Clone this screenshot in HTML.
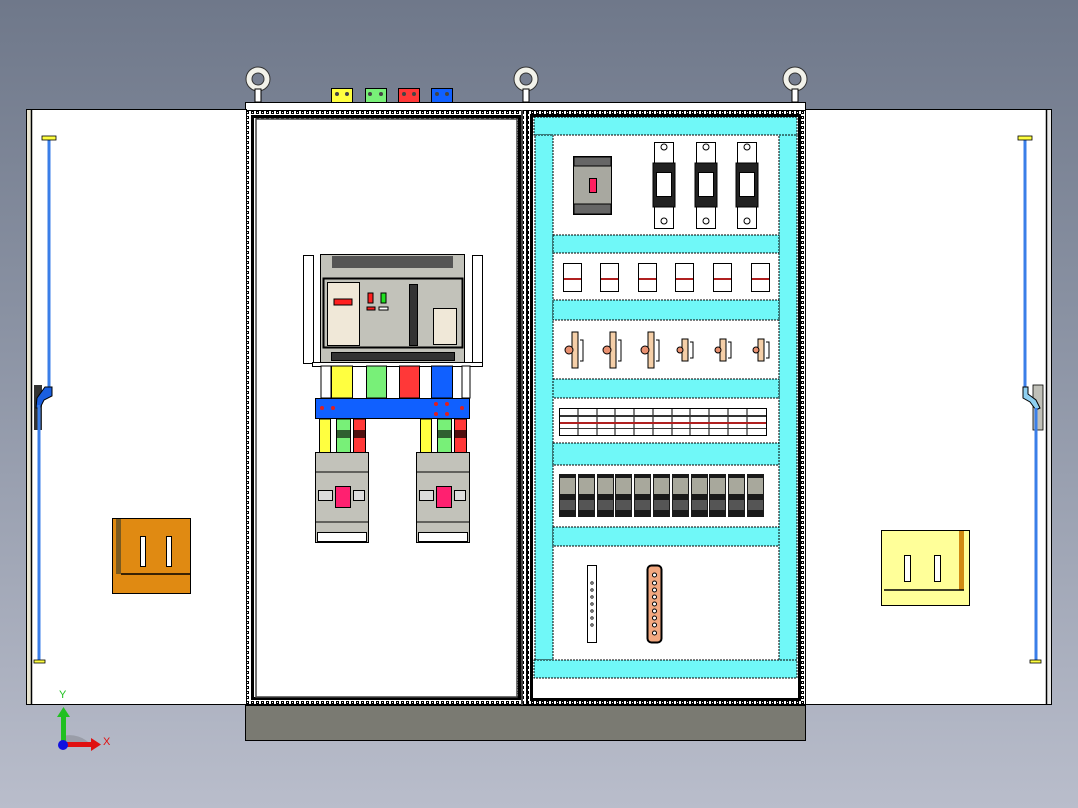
<!DOCTYPE html>
<html><head><meta charset="utf-8"><style>
html,body{margin:0;padding:0;width:1078px;height:808px;overflow:hidden;font-family:"Liberation Sans",sans-serif}
body{background:linear-gradient(180deg,#6f788a 0%,#8a92a3 40%,#b9bdcb 100%)}
</style></head><body>
<svg width="1078" height="808" viewBox="0 0 1078 808" xmlns="http://www.w3.org/2000/svg" style="position:absolute;left:0;top:0">
<defs>
<pattern id="dots" width="5" height="5" patternUnits="userSpaceOnUse"><rect width="5" height="5" fill="#fff"/><rect x="1" y="1" width="3" height="3" fill="#000"/><rect x="2" y="2" width="1" height="1" fill="#fff"/></pattern>
</defs>
<!-- eye bolts -->
<g fill="none" stroke="#333" stroke-width="7">
<circle cx="258" cy="79" r="9"/><circle cx="526" cy="79" r="9"/><circle cx="795" cy="79" r="9"/></g>
<g fill="none" stroke="#f2f2ea" stroke-width="5">
<circle cx="258" cy="79" r="9"/><circle cx="526" cy="79" r="9"/><circle cx="795" cy="79" r="9"/></g>
<g fill="#fff" stroke="#000" stroke-width="1"><rect x="255" y="89" width="6" height="13"/><rect x="523" y="89" width="6" height="13"/><rect x="792" y="89" width="6" height="13"/></g>
<!-- colored terminals -->
<g stroke="#000" stroke-width="1"><rect x="331.5" y="88.5" width="21" height="14" fill="#ffff40"/><rect x="365.5" y="88.5" width="21" height="14" fill="#78f078"/><rect x="398.5" y="88.5" width="21" height="14" fill="#ff3838"/><rect x="431.5" y="88.5" width="21" height="14" fill="#1060ff"/></g>
<g fill="#444"><circle cx="337" cy="94" r="2"/><circle cx="347" cy="94" r="2"/><circle cx="370" cy="94" r="2"/><circle cx="381" cy="94" r="2"/><circle cx="404" cy="94" r="2"/><circle cx="414" cy="94" r="2"/><circle cx="437" cy="94" r="2"/><circle cx="447" cy="94" r="2"/></g>
<!-- top band -->
<rect x="245.5" y="102.5" width="560" height="8" fill="#fff" stroke="#000"/>
<!-- plinth -->
<rect x="245.5" y="705.5" width="560" height="35" fill="#7a7a72" stroke="#000"/>
<!-- left door -->
<rect x="26.5" y="109.5" width="220" height="595" fill="#fff" stroke="#000"/>
<rect x="27" y="110" width="4" height="594" fill="#e8e4d0"/><line x1="31.5" y1="110" x2="31.5" y2="704" stroke="#000" stroke-width="1.5"/>
<line x1="49" y1="140" x2="49" y2="388" stroke="#3a7ee8" stroke-width="3"/>
<rect x="42" y="136" width="14" height="4" fill="#ffff40" stroke="#000" stroke-width=".8"/>
<rect x="34" y="385" width="8" height="45" fill="#333"/>
<path d="M45 387 L52 387 L52 396 L44 400 L40 408 L36 408 L37 398 Z" fill="#1a5fe0" stroke="#000" stroke-width="1"/>
<line x1="39" y1="405" x2="39" y2="662" stroke="#3a7ee8" stroke-width="3"/>
<rect x="34" y="660" width="11" height="3" fill="#ffff40" stroke="#000" stroke-width=".8"/>
<rect x="112.5" y="518.5" width="78" height="75" fill="#e08a12" stroke="#000"/>
<rect x="116" y="519" width="5" height="55" fill="#7a5a20"/><line x1="121" y1="574" x2="190" y2="574" stroke="#000" stroke-width="1.5"/>
<rect x="140.5" y="536.5" width="5" height="30" fill="#fff" stroke="#000"/><rect x="166.5" y="536.5" width="5" height="30" fill="#fff" stroke="#000"/>
<!-- right door -->
<rect x="805.5" y="109.5" width="246" height="595" fill="#fff" stroke="#000"/>
<rect x="1046" y="110" width="5" height="594" fill="#e8e8e8"/><line x1="1046.5" y1="110" x2="1046.5" y2="704" stroke="#000" stroke-width="1.5"/>
<line x1="1025" y1="140" x2="1025" y2="388" stroke="#3a7ee8" stroke-width="3"/>
<rect x="1018" y="136" width="14" height="4" fill="#ffff40" stroke="#000" stroke-width=".8"/>
<rect x="1033" y="385" width="10" height="45" fill="#c0c0b8" stroke="#000" stroke-width=".8"/>
<path d="M1023 387 L1028 387 L1028 394 L1036 400 L1040 408 L1036 410 L1030 402 L1023 398 Z" fill="#8fd0f0" stroke="#000" stroke-width="1"/>
<line x1="1036" y1="408" x2="1036" y2="662" stroke="#3a7ee8" stroke-width="3"/>
<rect x="1030" y="660" width="11" height="3" fill="#ffff40" stroke="#000" stroke-width=".8"/>
<rect x="881.5" y="530.5" width="88" height="75" fill="#ffff99" stroke="#000"/>
<rect x="959" y="531" width="5" height="59" fill="#d08a12"/><line x1="884" y1="590" x2="964" y2="590" stroke="#000" stroke-width="1.5"/>
<rect x="904.5" y="555.5" width="6" height="26" fill="#fff" stroke="#000"/><rect x="934.5" y="555.5" width="6" height="26" fill="#fff" stroke="#000"/>
<!-- left compartment frame -->
<rect x="246" y="110" width="281" height="595" fill="url(#dots)"/>
<rect x="246.5" y="110.5" width="280" height="594" fill="none" stroke="#000"/>
<rect x="252.5" y="116.5" width="267" height="582" fill="none" stroke="#000" stroke-width="3"/>
<rect x="256" y="119" width="261" height="578" fill="#fff" stroke="#444" stroke-width="1.5"/>
<line x1="522" y1="110" x2="522" y2="705" stroke="#444" stroke-width="2"/>
<!-- right compartment frame -->
<rect x="527" y="110" width="279" height="595" fill="url(#dots)"/>
<rect x="527.5" y="110.5" width="278" height="594" fill="none" stroke="#000"/>
<rect x="531.5" y="115.5" width="268" height="584" fill="#fff" stroke="#000" stroke-width="3"/>
<g fill="#70f8f8" stroke="#000" stroke-width="1" stroke-dasharray="2 1">
<rect x="534" y="117" width="263" height="18"/>
<rect x="535" y="135" width="18" height="525"/>
<rect x="779" y="135" width="18" height="525"/>
<rect x="534" y="660" width="263" height="18"/>
<rect x="553" y="235" width="226" height="18"/><rect x="553" y="300" width="226" height="20"/><rect x="553" y="379" width="226" height="19"/><rect x="553" y="443" width="226" height="22"/><rect x="553" y="527" width="226" height="19"/>
</g>
<!-- ACB -->
<g stroke="#000" stroke-width="1">
<rect x="303.5" y="255.5" width="10" height="108" fill="#fff"/><rect x="472.5" y="255.5" width="10" height="108" fill="#fff"/>
<rect x="312.5" y="362.5" width="170" height="4" fill="#fff"/>
<rect x="320.5" y="254.5" width="144" height="108" fill="#c2c2ba"/>
<rect x="332" y="256" width="121" height="12" fill="#555" stroke="none"/>
<rect x="323.5" y="278.5" width="139" height="69" fill="#c2c2ba" stroke-width="2"/>
<rect x="327.5" y="282.5" width="32" height="63" fill="#f0e8d8"/>
<rect x="334" y="299" width="18" height="6" fill="#ff2020"/>
<rect x="368" y="293" width="5" height="10" fill="#ff2020"/><rect x="381" y="293" width="5" height="10" fill="#20e020"/>
<rect x="367" y="307" width="8" height="3" fill="#ff2020"/><rect x="379" y="307" width="9" height="3" fill="#fff"/>
<rect x="409.5" y="284.5" width="8" height="61" fill="#333"/>
<rect x="433.5" y="308.5" width="23" height="36" fill="#f0e8d8"/>
<rect x="331.5" y="352.5" width="123" height="8" fill="#333"/>
</g>
<!-- busbars -->
<g stroke="#000" stroke-width="1">
<rect x="321" y="366" width="10" height="32" fill="#fff"/><rect x="462" y="366" width="8" height="32" fill="#fff"/>
<rect x="331.5" y="366" width="21" height="32" fill="#ffff40"/><rect x="366.5" y="366" width="20" height="32" fill="#78f078"/><rect x="399.5" y="366" width="20" height="32" fill="#ff3838"/><rect x="431.5" y="366" width="21" height="32" fill="#1060ff"/>
<rect x="315.5" y="398.5" width="154" height="20" fill="#1060ff"/>
<rect x="319.5" y="419" width="11" height="41" fill="#ffff40"/><rect x="336.5" y="419" width="14" height="41" fill="#78f078"/><rect x="353.5" y="419" width="12" height="41" fill="#ff3838"/>
<rect x="420.5" y="419" width="11" height="41" fill="#ffff40"/><rect x="437.5" y="419" width="14" height="41" fill="#78f078"/><rect x="454.5" y="419" width="12" height="41" fill="#ff3838"/>
</g>
<rect x="337" y="430" width="13" height="8" fill="#2f6030"/><rect x="354" y="430" width="11" height="8" fill="#501010"/>
<rect x="438" y="430" width="13" height="8" fill="#2f6030"/><rect x="455" y="430" width="11" height="8" fill="#501010"/>
<g fill="#e02020"><circle cx="322" cy="408" r="2"/><circle cx="333" cy="408" r="2"/><circle cx="436" cy="404" r="2"/><circle cx="447" cy="404" r="2"/><circle cx="436" cy="414" r="2"/><circle cx="447" cy="414" r="2"/><circle cx="462" cy="408" r="2"/></g>
<!-- small breakers -->
<g stroke="#000" stroke-width="1">
<rect x="315.5" y="452.5" width="53" height="90" fill="#c2c2ba"/><rect x="416.5" y="452.5" width="53" height="90" fill="#c2c2ba"/>
<line x1="316" y1="472" x2="368" y2="472"/><line x1="316" y1="522" x2="368" y2="522"/>
<line x1="417" y1="472" x2="469" y2="472"/><line x1="417" y1="522" x2="469" y2="522"/>
<rect x="335.5" y="486.5" width="15" height="21" fill="#ff2070"/><rect x="436.5" y="486.5" width="15" height="21" fill="#ff2070"/>
<rect x="318.5" y="490.5" width="14" height="10" fill="#ddd"/><rect x="353.5" y="490.5" width="11" height="10" fill="#ddd"/>
<rect x="419.5" y="490.5" width="14" height="10" fill="#ddd"/><rect x="454.5" y="490.5" width="11" height="10" fill="#ddd"/>
<rect x="317.5" y="532.5" width="49" height="9" fill="#fff"/><rect x="418.5" y="532.5" width="49" height="9" fill="#fff"/>
</g>
<!-- row1: MCCB + fuses -->
<g stroke="#000" stroke-width="1">
<rect x="573.5" y="156.5" width="38" height="58" fill="#a8a8a0"/>
<rect x="574" y="157" width="37" height="9" fill="#666"/><rect x="574" y="204" width="37" height="10" fill="#666"/>
<rect x="589.5" y="178.5" width="7" height="14" fill="#ff2060"/>
<rect x="654.5" y="142.5" width="19" height="86" fill="#fff"/><rect x="696.5" y="142.5" width="19" height="86" fill="#fff"/><rect x="737.5" y="142.5" width="19" height="86" fill="#fff"/>
<rect x="653" y="163" width="22" height="44" fill="#222"/><rect x="695" y="163" width="22" height="44" fill="#222"/><rect x="736" y="163" width="22" height="44" fill="#222"/>
<rect x="656.5" y="172.5" width="15" height="24" fill="#fff"/><rect x="698.5" y="172.5" width="15" height="24" fill="#fff"/><rect x="739.5" y="172.5" width="15" height="24" fill="#fff"/>
<circle cx="664" cy="147" r="3" fill="#fff"/><circle cx="706" cy="147" r="3" fill="#fff"/><circle cx="747" cy="147" r="3" fill="#fff"/>
<circle cx="664" cy="221" r="3" fill="#fff"/><circle cx="706" cy="221" r="3" fill="#fff"/><circle cx="747" cy="221" r="3" fill="#fff"/>
</g>
<!-- row2: modules -->
<g stroke="#000" stroke-width="1" fill="#fff">
<rect x="563.5" y="263.5" width="18" height="28"/><rect x="600.5" y="263.5" width="18" height="28"/><rect x="638.5" y="263.5" width="18" height="28"/><rect x="675.5" y="263.5" width="18" height="28"/><rect x="713.5" y="263.5" width="18" height="28"/><rect x="751.5" y="263.5" width="18" height="28"/>
</g>
<g fill="#b02020"><rect x="564" y="278" width="17" height="2"/><rect x="601" y="278" width="17" height="2"/><rect x="639" y="278" width="17" height="2"/><rect x="676" y="278" width="17" height="2"/><rect x="714" y="278" width="17" height="2"/><rect x="752" y="278" width="17" height="2"/></g>
<!-- row3: pilot lights -->
<g stroke="#000" stroke-width="1">
<g fill="#f5cfa8"><rect x="572" y="332" width="6" height="36"/><rect x="610" y="332" width="6" height="36"/><rect x="648" y="332" width="6" height="36"/><rect x="682" y="339" width="6" height="22"/><rect x="720" y="339" width="6" height="22"/><rect x="758" y="339" width="6" height="22"/></g>
<g fill="#e89070"><circle cx="569" cy="350" r="4"/><circle cx="607" cy="350" r="4"/><circle cx="645" cy="350" r="4"/><circle cx="680" cy="350" r="3"/><circle cx="718" cy="350" r="3"/><circle cx="756" cy="350" r="3"/></g>
<g fill="none"><path d="M580 340 h3 v21 h-3"/><path d="M618 340 h3 v21 h-3"/><path d="M656 340 h3 v21 h-3"/><path d="M690 342 h3 v16 h-3"/><path d="M728 342 h3 v16 h-3"/><path d="M766 342 h3 v16 h-3"/></g>
</g>
<!-- row4: strip -->
<rect x="559.5" y="408.5" width="207" height="27" fill="#fff" stroke="#000"/>
<g stroke="#000"><line x1="578" y1="408" x2="578" y2="436"/><line x1="597" y1="408" x2="597" y2="436"/><line x1="615" y1="408" x2="615" y2="436"/><line x1="634" y1="408" x2="634" y2="436"/><line x1="653" y1="408" x2="653" y2="436"/><line x1="672" y1="408" x2="672" y2="436"/><line x1="690" y1="408" x2="690" y2="436"/><line x1="709" y1="408" x2="709" y2="436"/><line x1="728" y1="408" x2="728" y2="436"/><line x1="747" y1="408" x2="747" y2="436"/></g>
<rect x="560" y="415" width="206" height="2" fill="#333"/><rect x="560" y="422" width="206" height="2" fill="#b02020"/><rect x="560" y="428" width="206" height="1" fill="#333"/>
<!-- row5: dark modules -->
<g fill="#1a1a1a">
<rect x="559" y="474" width="17" height="43"/><rect x="578" y="474" width="17" height="43"/><rect x="597" y="474" width="17" height="43"/><rect x="615" y="474" width="17" height="43"/><rect x="634" y="474" width="17" height="43"/><rect x="653" y="474" width="17" height="43"/><rect x="672" y="474" width="17" height="43"/><rect x="691" y="474" width="17" height="43"/><rect x="709" y="474" width="17" height="43"/><rect x="728" y="474" width="17" height="43"/><rect x="747" y="474" width="17" height="43"/>
</g>
<g fill="#a8a89c">
<rect x="560" y="478" width="15" height="16"/><rect x="579" y="478" width="15" height="16"/><rect x="598" y="478" width="15" height="16"/><rect x="616" y="478" width="15" height="16"/><rect x="635" y="478" width="15" height="16"/><rect x="654" y="478" width="15" height="16"/><rect x="673" y="478" width="15" height="16"/><rect x="692" y="478" width="15" height="16"/><rect x="710" y="478" width="15" height="16"/><rect x="729" y="478" width="15" height="16"/><rect x="748" y="478" width="15" height="16"/>
</g>
<g fill="#555">
<rect x="560" y="500" width="15" height="10"/><rect x="579" y="500" width="15" height="10"/><rect x="598" y="500" width="15" height="10"/><rect x="616" y="500" width="15" height="10"/><rect x="635" y="500" width="15" height="10"/><rect x="654" y="500" width="15" height="10"/><rect x="673" y="500" width="15" height="10"/><rect x="692" y="500" width="15" height="10"/><rect x="710" y="500" width="15" height="10"/><rect x="729" y="500" width="15" height="10"/><rect x="748" y="500" width="15" height="10"/>
</g>
<!-- row6 -->
<rect x="587.5" y="565.5" width="9" height="77" fill="#fff" stroke="#000"/>
<g fill="none" stroke="#000" stroke-width=".8"><circle cx="592" cy="583" r="1.2"/><circle cx="592" cy="590" r="1.2"/><circle cx="592" cy="597" r="1.2"/><circle cx="592" cy="604" r="1.2"/><circle cx="592" cy="611" r="1.2"/><circle cx="592" cy="618" r="1.2"/><circle cx="592" cy="625" r="1.2"/></g>
<rect x="647.5" y="565.5" width="14" height="77" rx="4" fill="#f2a880" stroke="#000" stroke-width="2"/>
<g fill="#fff" stroke="#000"><circle cx="654.5" cy="575" r="2"/><circle cx="654.5" cy="583" r="2"/><circle cx="654.5" cy="590" r="2"/><circle cx="654.5" cy="597" r="2"/><circle cx="654.5" cy="604" r="2"/><circle cx="654.5" cy="611" r="2"/><circle cx="654.5" cy="618" r="2"/><circle cx="654.5" cy="625" r="2"/><circle cx="654.5" cy="633" r="2"/></g>
<!-- axis triad -->
<path d="M63 736 A 28 28 0 0 1 91 745 L63 745 Z" fill="#8a8c94" opacity=".6"/>
<rect x="61" y="716" width="5" height="26" fill="#20c020"/><path d="M57 717 L63.5 707 L70 717 Z" fill="#20c020"/>
<rect x="64" y="742" width="28" height="5" fill="#e01010"/><path d="M91 738 L101 744.5 L91 751 Z" fill="#e01010"/>
<circle cx="63" cy="745" r="5" fill="#1010e0"/>
<text x="59" y="698" font-size="11" fill="#20c020" font-family="Liberation Sans, sans-serif">Y</text>
<text x="103" y="745" font-size="11" fill="#e01010" font-family="Liberation Sans, sans-serif">X</text>
</svg>
</body></html>
